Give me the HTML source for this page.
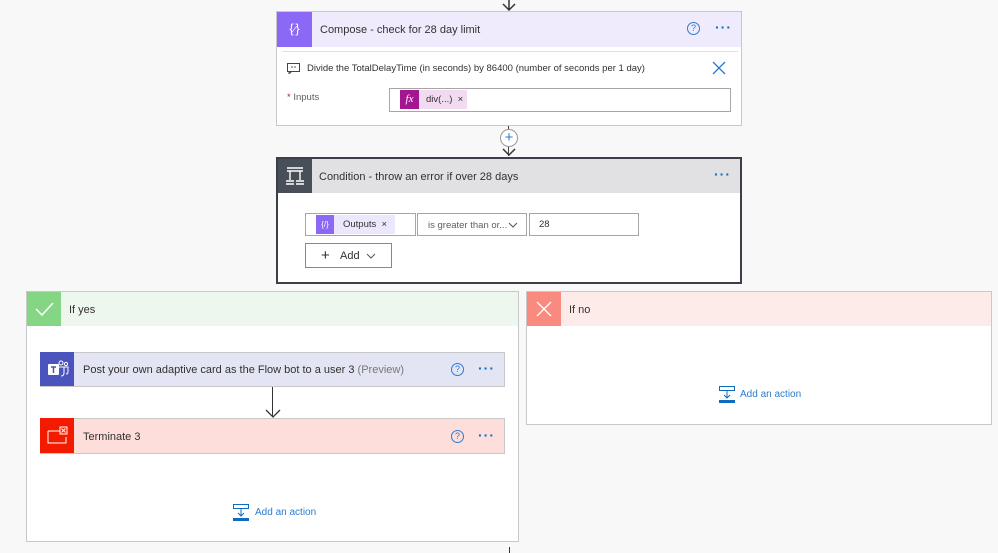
<!DOCTYPE html>
<html><head><meta charset="utf-8"><style>
*{box-sizing:border-box;margin:0;padding:0}
body{width:998px;height:553px;background:#f8f8f8;font-family:"Liberation Sans",sans-serif;font-size:11px;color:#323130;position:relative;overflow:hidden}
.a{position:absolute}
.card{position:absolute;background:#fff;border:1px solid #c8c8c8}
.hdr{position:absolute;left:0;right:0;top:0;height:35px}
.ic{position:absolute;left:0;top:0;width:35px;height:35px}
.t{position:absolute;left:43px;top:11px;font-size:11px;color:#323130;white-space:nowrap}
.dots{position:absolute;font-size:14px;color:#0f6cbd;letter-spacing:1px;font-weight:bold}
.help{position:absolute;width:13px;height:13px;border:1.3px solid #2b7cd3;border-radius:50%;color:#2b7cd3;font-size:9px;text-align:center;line-height:11px}
.box{position:absolute;border:1px solid #a6a6a6;background:#fff}
.add{position:absolute;color:#2b7cd3;font-size:10px}
</style></head><body>
<!-- top arrow -->
<svg class="a" style="left:501px;top:0" width="16" height="12"><path d="M8 0V10M2 4L8 10L14 4" stroke="#333" stroke-width="1.5" fill="none"/></svg>

<!-- Compose -->
<div class="card" style="left:276px;top:11px;width:466px;height:115px">
 <div class="hdr" style="background:#efebfd"><div class="ic" style="background:#8b68f5;color:#fff;font-size:13px;text-align:center;line-height:34px">{<i style="font-size:10px">⁄</i>}</div>
 <div class="t" style="top:12px">Compose - check for 28 day limit</div>
 <div class="help" style="left:410px;top:10px">?</div><div class="dots" style="left:438px;top:7px">···</div></div>
 <div class="a" style="left:5px;top:39px;width:456px;height:1px;background:#e1e1e1"></div>
 <svg class="a" style="left:10px;top:51px" width="13" height="11"><rect x="0.5" y="0.5" width="12" height="8" fill="none" stroke="#444"/><path d="M2 8.5V11L4.5 8.5" stroke="#444" fill="none"/><circle cx="5" cy="4" r=".8" fill="#444"/><circle cx="8" cy="4" r=".8" fill="#444"/></svg>
 <div class="a" style="left:30px;top:51px;font-size:9.5px;color:#323130">Divide the TotalDelayTime (in seconds) by 86400 (number of seconds per 1 day)</div>
 <svg class="a" style="left:435px;top:49px" width="14" height="14"><path d="M1 1L13 13M13 1L1 13" stroke="#2b7cd3" stroke-width="1.3"/></svg>
 <div class="a" style="left:10px;top:80px;font-size:9.5px;color:#605e5c"><span style="color:#a4262c">*</span> Inputs</div>
 <div class="box" style="left:112px;top:76px;width:342px;height:24px">
  <div class="a" style="left:10px;top:1px;width:67px;height:19px;background:#f2daf0"></div>
  <div class="a" style="left:10px;top:1px;width:19px;height:19px;background:#a2168f;color:#fff;font-style:italic;font-family:'Liberation Serif',serif;font-size:11px;text-align:center;line-height:19px">fx</div>
  <div class="a" style="left:36px;top:5px;font-size:9.5px">div(...) &nbsp;×</div>
 </div>
</div>

<!-- connector -->
<div class="a" style="left:508px;top:126px;width:1px;height:30px;background:#444"></div>
<div class="a" style="left:500px;top:129px;width:18px;height:18px;border-radius:50%;background:#fff;border:1px solid #999;color:#2b7cd3;text-align:center;line-height:15px;font-size:15px">+</div>
<svg class="a" style="left:501px;top:146px" width="16" height="11"><path d="M2 3L8 9L14 3" stroke="#333" stroke-width="1.5" fill="none"/></svg>

<!-- Condition -->
<div class="card" style="left:276px;top:157px;width:466px;height:127px;border:2px solid #3b3f48">
 <div class="hdr" style="background:#e1e1e3;height:34px"><div class="ic" style="background:#484f58;width:34px;height:34px">
  <svg width="34" height="34"><path d="M9 9H25M9 12H25M12 12V21M22 12V21M8 22H16M18 22H26M8 25H16M18 25H26" stroke="#fff" stroke-width="1.4" fill="none"/></svg></div>
  <div class="t" style="left:41px;top:12px">Condition - throw an error if over 28 days</div>
  <div class="dots" style="left:436px;top:7px">···</div></div>
 <div class="box" style="left:27px;top:54px;width:111px;height:23px">
  <div class="a" style="left:10px;top:1px;width:79px;height:19px;background:#ece7fd"></div>
  <div class="a" style="left:10px;top:1px;width:18px;height:19px;background:#8b68f5;color:#fff;font-size:8px;text-align:center;line-height:19px">{/}</div>
  <div class="a" style="left:37px;top:5px;font-size:9.5px">Outputs &nbsp;×</div>
 </div>
 <div class="box" style="left:139px;top:54px;width:110px;height:23px"><div class="a" style="left:10px;top:6px;font-size:9.5px;color:#605e5c">is greater than or...</div>
  <svg class="a" style="left:90px;top:8px" width="10" height="6"><path d="M1 1L5 5L9 1" stroke="#555" fill="none"/></svg></div>
 <div class="box" style="left:251px;top:54px;width:110px;height:23px"><div class="a" style="left:9px;top:5px;font-size:9.5px">28</div></div>
 <div class="box" style="left:27px;top:84px;width:87px;height:25px;border-color:#8a8886">
  <div class="a" style="left:15px;top:4px;font-size:15px;line-height:15px">+</div>
  <div class="a" style="left:34px;top:6px;font-size:11px">Add</div>
  <svg class="a" style="left:60px;top:9px" width="10" height="6"><path d="M1 1L5 5L9 1" stroke="#555" fill="none"/></svg></div>
</div>

<!-- If yes -->
<div class="card" style="left:26px;top:291px;width:493px;height:251px">
 <div class="hdr" style="background:#edf7ed;height:34px"><div class="ic" style="background:#84d584;width:34px;height:34px">
  <svg width="34" height="34"><path d="M9 17L15 23L26 11" stroke="#fff" stroke-width="1.5" fill="none"/></svg></div>
  <div class="t" style="left:42px;top:12px">If yes</div></div>
 <div class="a" style="left:13px;top:60px;width:465px;height:35px;background:#e4e5f4;border:1px solid #c8c8c8">
  <div class="ic" style="background:#4b53bc;width:34px;height:34px;top:-1px;left:-1px">
   <svg width="34" height="34"><rect x="8" y="12" width="11" height="11" rx="1" fill="#fff"/><path d="M11 15H16M13.5 15V21" stroke="#4b53bc" stroke-width="1.5"/><circle cx="21" cy="11" r="2" fill="none" stroke="#fff"/><circle cx="26" cy="12" r="1.6" fill="none" stroke="#fff"/><path d="M19 15H24V21Q24 24 21 24M24.5 15H28V20Q28 22 26 22" fill="none" stroke="#fff"/></svg></div>
  <div class="t" style="left:42px;top:11px">Post your own adaptive card as the Flow bot to a user 3 <span style="color:#797775">(Preview)</span></div>
  <div class="help" style="left:410px;top:10px">?</div><div class="dots" style="left:437px;top:7px">···</div></div>
 <div class="a" style="left:245px;top:95px;width:1px;height:30px;background:#333"></div>
 <svg class="a" style="left:238px;top:117px" width="16" height="10"><path d="M1 1L8 8L15 1" stroke="#333" stroke-width="1.3" fill="none"/></svg>
 <div class="a" style="left:13px;top:126px;width:465px;height:36px;background:#fddedb;border:1px solid #c8c8c8">
  <div class="ic" style="background:#f21b00;width:34px;height:35px;top:-1px;left:-1px">
   <svg width="34" height="35"><path d="M8 13H20M8 13V25H26V19" stroke="#fff" fill="none"/><rect x="20" y="9" width="7" height="7" fill="none" stroke="#fff"/><path d="M21.5 10.5L25.5 14.5M25.5 10.5L21.5 14.5" stroke="#fff"/></svg></div>
  <div class="t" style="left:42px;top:12px">Terminate 3</div>
  <div class="help" style="left:410px;top:11px">?</div><div class="dots" style="left:437px;top:8px">···</div></div>
 <svg class="a" style="left:206px;top:212px" width="18" height="18"><rect x="0.5" y="0.5" width="15" height="4" fill="none" stroke="#0f6cbd"/><path d="M8 5V12M5 9L8 12L11 9" stroke="#0f6cbd" fill="none"/><rect x="0" y="14" width="16" height="3" fill="#0f6cbd"/></svg>
 <div class="add" style="left:228px;top:215px">Add an action</div>
</div>

<!-- If no -->
<div class="card" style="left:526px;top:291px;width:466px;height:134px">
 <div class="hdr" style="background:#fdebea;height:34px"><div class="ic" style="background:#f88a80;width:34px;height:34px">
  <svg width="34" height="34"><path d="M10 10L24 24M24 10L10 24" stroke="#fff" stroke-width="1.3"/></svg></div>
  <div class="t" style="left:42px;top:12px">If no</div></div>
 <svg class="a" style="left:192px;top:94px" width="18" height="18"><rect x="0.5" y="0.5" width="15" height="4" fill="none" stroke="#0f6cbd"/><path d="M8 5V12M5 9L8 12L11 9" stroke="#0f6cbd" fill="none"/><rect x="0" y="14" width="16" height="3" fill="#0f6cbd"/></svg>
 <div class="add" style="left:213px;top:97px">Add an action</div>
</div>
<div class="a" style="left:509px;top:547px;width:1px;height:6px;background:#333"></div>
</body></html>
